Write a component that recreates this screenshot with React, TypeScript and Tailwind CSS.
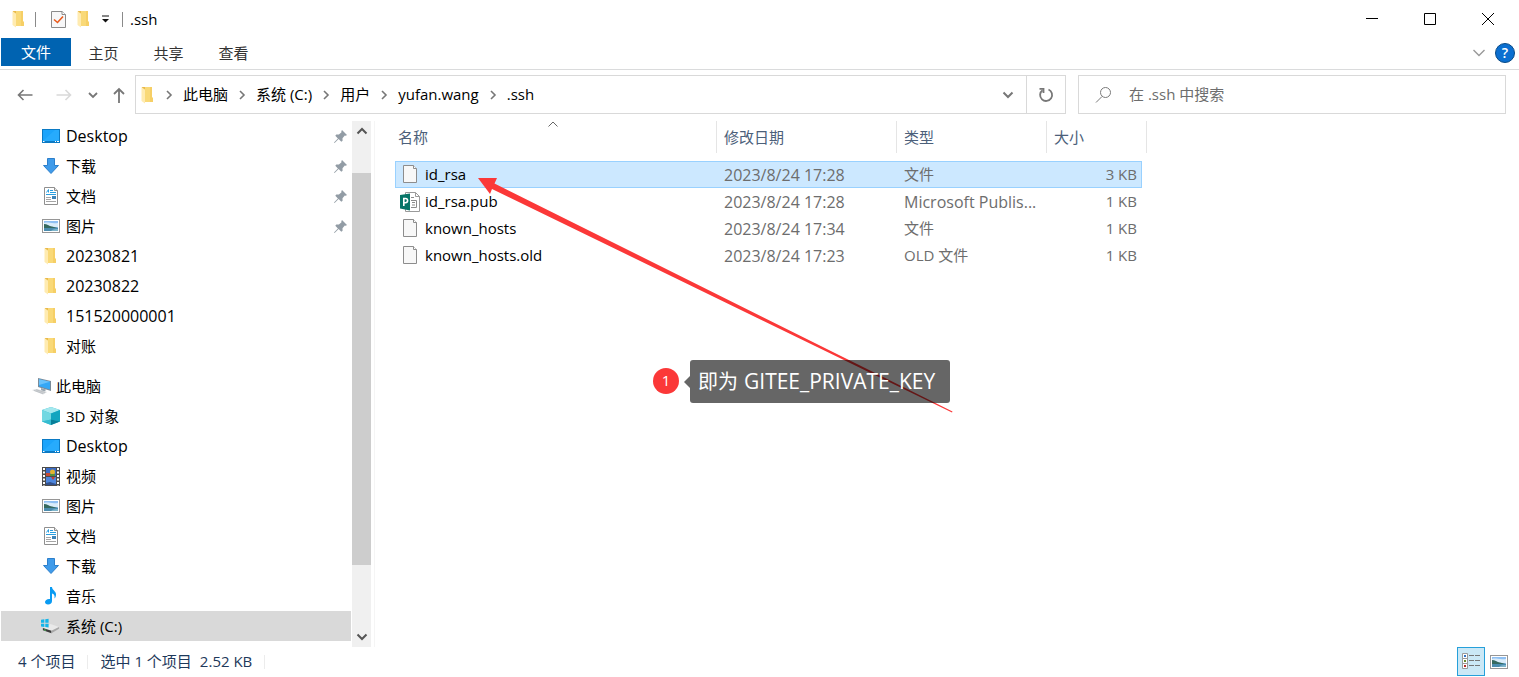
import type { ReactNode } from 'react';

interface TreeItem {
  id: string;
  label: string;
  icon: ReactNode;
  pinned?: boolean;
  selected?: boolean;
}

interface FileItem {
  name: string;
  icon: ReactNode;
  modified: string;
  type: string;
  size: string;
  selected?: boolean;
}

function FolderIcon() {
  return (
    <svg width="13" height="18" viewBox="0 0 13 18" className="shrink-0">
      <path d="M1 1h10v10.500l1 .5v4H3z" fill="#fbdc80" />
      <path d="M4 1h7v10.500l1 .5v4H4z" fill="#f9d978" />
      <path d="M9 1h2v10.500l1 .5v4H9z" fill="#f6cf66" />
      <path d="M0.500 1.500L4 3.500V17.500L0.500 15z" fill="#ffebb0" />
      <path d="M0.500 1h3.500v2.500z" fill="#e9b94c" />
    </svg>
  );
}

function DesktopIcon() {
  return (
    <svg width="18" height="14" viewBox="0 0 18 14">
      <rect width="18" height="14" fill="#0b7ac4" />
      <rect x="1" y="1" width="16" height="11" fill="#1ca4fb" />
      <path d="M1 12L13 1h4v11z" fill="#2eb0ff" opacity=".6" />
      <path d="M1 12.500h1.500M13 12.500h1M15 12.500h2" stroke="#fff" />
    </svg>
  );
}

function DownloadIcon() {
  return (
    <svg width="18" height="18" viewBox="0 0 18 18">
      <path d="M5.500 1.500h7v7h4L9 16.500 1.500 8.500h4z" fill="#3f9bea" stroke="#2c7fcb" />
    </svg>
  );
}

function DocumentIcon() {
  return (
    <svg width="18" height="18" viewBox="0 0 18 18">
      <path d="M2.500 .5h10l3 3v14h-13z" fill="#fff" stroke="#8f8f8f" />
      <path d="M12.500 .5v3h3" fill="#e8e8e8" stroke="#8f8f8f" />
      <path d="M4.500 5.500l2-3v3M8 3.500h3M8 5.500h6M4 7.500h10" fill="none" stroke="#2a9fe0" />
      <path d="M4 10.500h5M4 12.500h5M4 14.500h10" stroke="#a5a5a5" />
      <rect x="10" y="9" width="4" height="3" fill="#3c83b8" />
    </svg>
  );
}

function PictureIcon() {
  return (
    <svg width="18" height="14" viewBox="0 0 18 14">
      <rect x=".5" y=".5" width="17" height="13" fill="#fff" stroke="#969696" />
      <rect x="2" y="2" width="14" height="10" fill="#8fc0f3" />
      <path d="M2 4c4-1.500 6 1 14 0v4H2z" fill="#d9ecfa" />
      <path d="M2 5c3 0 5 2 8 2.500l6 1.500H2z" fill="#35695f" />
      <path d="M2 9h14v3H2z" fill="#4b8cae" />
      <path d="M9 12c2-2 5-2 7-2v2z" fill="#7eb5cb" />
    </svg>
  );
}

function ComputerIcon() {
  return (
    <svg width="20" height="18" viewBox="0 0 20 18">
      <path d="M6 1l13 3v10L6 10z" fill="#7a8b99" />
      <path d="M7 2.200l11 2.600v7.800L7 9.200z" fill="#35a7f5" />
      <path d="M7 2.200l11 2.600L7 8z" fill="#6ac2fb" />
      <path d="M9 11l5 1.500-1 2-4-1z" fill="#9aa5ae" />
      <path d="M0 13l5-1 10 3-4 2.500z" fill="#d2d5d8" />
      <path d="M2 13.500l9 3M4 12.800l9 2.700" stroke="#aeb3b8" strokeWidth=".6" />
    </svg>
  );
}

function CubeIcon() {
  return (
    <svg width="18" height="18" viewBox="0 0 18 18">
      <path d="M9 0l9 3v11.500L9 18l-9-3.500V3z" fill="#35bcd0" />
      <path d="M9 0l9 3-9 3.500L0 3z" fill="#a4e8ee" />
      <path d="M0 3l9 3.500v6L0 14.500z" fill="#72d8e2" />
      <path d="M9 6.500L18 3v11.500l-9-2z" fill="#12a5bf" />
      <path d="M0 14.500l9-2V18z" fill="#35bcd0" />
      <path d="M9 12.500l9 2L9 18z" fill="#087f99" />
    </svg>
  );
}

function VideoIcon() {
  return (
    <svg width="18" height="19" viewBox="0 0 18 19">
      <rect width="18" height="19" fill="#4b4b4b" />
      <path d="M2 1v18M16 1v18" stroke="#fff" strokeWidth="2" strokeDasharray="2 1.500" />
      <rect x="4" y="1" width="10" height="8" fill="#3b6cc7" />
      <rect x="4" y="10" width="10" height="8" fill="#4d86dd" />
      <circle cx="10.500" cy="5" r="2.500" fill="#e2b32e" />
      <path d="M4 6h4v3H4z" fill="#c84b33" />
      <path d="M8 7h5v2H8z" fill="#55903a" />
      <path d="M9 10h4l-2 3z" fill="#c53d32" />
      <path d="M4 16l4-1 6 2v1H4z" fill="#32508c" />
    </svg>
  );
}

function MusicIcon() {
  return (
    <svg width="18" height="18" viewBox="0 0 18 18">
      <path
        d="M8 0h2c0 3 4 4 4 7.500 0 1.500-.5 3-1.500 4 .5-3-.5-4.500-2.500-5V14c0 2-1.500 3.500-4 3.500-1.800 0-3-1-3-2.400C3 13 5.500 11.500 8 12z"
        fill="#0a9bf2"
      />
    </svg>
  );
}

function DriveIcon() {
  return (
    <svg width="20" height="16" viewBox="0 0 20 16">
      <path d="M2 10l8-4 9 3-8 4z" fill="#e9e9e9" />
      <path d="M2 10l9 3v2.500l-9-3z" fill="#3c3c3c" />
      <path d="M11 13l8-4v2l-8 4.500z" fill="#a9a9a9" />
      <path d="M3.500 12l1.500.5" stroke="#4be05b" strokeWidth="1.200" />
      <path d="M0 1.500L3.500 1v3.500H0zM4.500 .8L8 .3v4.200H4.500zM0 5.500h3.500V9L0 8.500zM4.500 5.500H8v4l-3.500-.4z" fill="#14b5ea" />
    </svg>
  );
}

function FileIcon() {
  return (
    <svg width="20" height="20" viewBox="0 0 20 20">
      <path d="M3.500 .5h10l3 3v14h-13z" fill="#f8f8f8" stroke="#8d8d8d" />
      <path d="M13.500 .5v3h3" fill="#fff" stroke="#8d8d8d" />
    </svg>
  );
}

function PublisherIcon() {
  return (
    <svg width="20" height="20" viewBox="0 0 20 20">
      <path d="M5.500 .5h10l4 4v15h-14z" fill="#fff" stroke="#9a9a9a" />
      <path d="M15.500 .5v4h4" fill="none" stroke="#9a9a9a" />
      <path d="M11 5.500h3M11 8.500h5.500v7H11M12 10.500h3M12 13h3" fill="none" stroke="#8b8b8b" />
      <path d="M0 3l10-1.500v17L0 16.500z" fill="#077568" />
      <path d="M3.800 14V6.500h1.700a2.100 2.100 0 0 1 0 4.200H3.800" fill="none" stroke="#fff" strokeWidth="1.600" />
    </svg>
  );
}

function CheckedPageIcon() {
  return (
    <svg width="15" height="19" viewBox="0 0 15 19">
      <path d="M.5 1.500h10.500l3.500 3v13H.5z" fill="#f7f7f8" stroke="#8b8b8b" />
      <path d="M11 1.500v3h3.500" fill="#fff" stroke="#8b8b8b" />
      <path d="M3 9.500l3.500 3L12 6.500" fill="none" stroke="#e95a1c" strokeWidth="1.600" />
    </svg>
  );
}

function PinIcon() {
  return (
    <svg width="13" height="13" viewBox="0 0 13 13">
      <path d="M8 0l5 5-1.200.8-1-.2-2.300 2.600.1 2.600-1.300 1-2.700-2.700L.6 13 0 12.400l3.900-4L1.300 5.700l1-1.300 2.600.1 2.600-2.300-.2-1z" fill="#929ca5" />
    </svg>
  );
}

function Chevron({ path, className }: { path: string; className: string }) {
  return (
    <svg width="12" height="12" viewBox="0 0 12 12" fill="none" stroke="currentColor" className={className}>
      <path d={path} />
    </svg>
  );
}

const CHEVRON_DOWN = 'M1.500 3.500L6 8l4.500-4.500';
const CHEVRON_UP = 'M1.500 8.500L6 4l4.500 4.500';

const QUICK_ACCESS: TreeItem[] = [
  { id: 'q-desktop', label: 'Desktop', icon: <DesktopIcon />, pinned: true },
  { id: 'q-downloads', label: '下载', icon: <DownloadIcon />, pinned: true },
  { id: 'q-documents', label: '文档', icon: <DocumentIcon />, pinned: true },
  { id: 'q-pictures', label: '图片', icon: <PictureIcon />, pinned: true },
  { id: 'q-0821', label: '20230821', icon: <FolderIcon /> },
  { id: 'q-0822', label: '20230822', icon: <FolderIcon /> },
  { id: 'q-1515', label: '151520000001', icon: <FolderIcon /> },
  { id: 'q-bills', label: '对账', icon: <FolderIcon /> }
];

const THIS_PC: TreeItem[] = [
  { id: 'p-3d', label: '3D 对象', icon: <CubeIcon /> },
  { id: 'p-desktop', label: 'Desktop', icon: <DesktopIcon /> },
  { id: 'p-videos', label: '视频', icon: <VideoIcon /> },
  { id: 'p-pictures', label: '图片', icon: <PictureIcon /> },
  { id: 'p-documents', label: '文档', icon: <DocumentIcon /> },
  { id: 'p-downloads', label: '下载', icon: <DownloadIcon /> },
  { id: 'p-music', label: '音乐', icon: <MusicIcon /> },
  { id: 'p-c', label: '系统 (C:)', icon: <DriveIcon />, selected: true }
];

const FILES: FileItem[] = [
  { name: 'id_rsa', icon: <FileIcon />, modified: '2023/8/24 17:28', type: '文件', size: '3 KB', selected: true },
  { name: 'id_rsa.pub', icon: <PublisherIcon />, modified: '2023/8/24 17:28', type: 'Microsoft Publis...', size: '1 KB' },
  { name: 'known_hosts', icon: <FileIcon />, modified: '2023/8/24 17:34', type: '文件', size: '1 KB' },
  { name: 'known_hosts.old', icon: <FileIcon />, modified: '2023/8/24 17:23', type: 'OLD 文件', size: '1 KB' }
];

const PATH = ['此电脑', '系统 (C:)', '用户', 'yufan.wang', '.ssh'];

// Latin-only names are set one step larger than the Chinese ones
const isLatin = (text: string) => /^[\x20-\x7e]+$/.test(text);

function TitleBar() {
  return (
    <header className="flex h-[38px] items-center pl-3 pr-0.5">
      <FolderIcon />
      <span className="ml-2.5 h-[15px] w-px bg-[#8a8a8a]" />
      <button aria-label="属性" className="ml-[15px]">
        <CheckedPageIcon />
      </button>
      <button aria-label="新建文件夹" className="ml-[11px]">
        <FolderIcon />
      </button>
      <button aria-label="自定义快速访问工具栏" className="ml-3">
        <svg width="8" height="8" viewBox="0 0 8 8">
          <path d="M0 1h7" stroke="#111" />
          <path d="M0 4h7L3.500 7.500z" fill="#111" />
        </svg>
      </button>
      <span className="ml-3 h-[15px] w-px bg-[#8a8a8a]" />
      <h1 className="ml-[7px] text-[15px]">.ssh</h1>
      <div className="ml-auto flex h-full">
        <button aria-label="最小化" className="flex w-[58px] items-center justify-center">
          <svg width="12" height="12" stroke="#000">
            <path d="M0 5.500h12" />
          </svg>
        </button>
        <button aria-label="最大化" className="flex w-[58px] items-center justify-center">
          <svg width="12" height="12" stroke="#000" fill="none">
            <path d="M.5 .5h11v11H.5z" />
          </svg>
        </button>
        <button aria-label="关闭" className="flex w-[58px] items-center justify-center">
          <svg width="12" height="12" stroke="#000">
            <path d="M0 0l12 12M12 0L0 12" />
          </svg>
        </button>
      </div>
    </header>
  );
}

function RibbonTabs() {
  return (
    <div className="flex h-8 items-start border-b border-[#dadbdc] pl-px text-[15px] text-[#333]">
      <button className="h-7 w-[70px] bg-[#0063b1] text-white">文件</button>
      {['主页', '共享', '查看'].map((tab) => (
        <button key={tab} className="h-[30px] w-[65px]">
          {tab}
        </button>
      ))}
      <div className="ml-auto flex h-[30px] items-center gap-2.5 pr-1">
        <button aria-label="展开功能区" className="text-[#999]">
          <svg width="12" height="8" fill="none" stroke="currentColor" strokeWidth="1.400">
            <path d="M.5 1L6 6.500 11.500 1" />
          </svg>
        </button>
        <button
          aria-label="帮助"
          className="flex size-5 items-center justify-center rounded-full border border-[#084a86] bg-[#0b6fd0] text-sm font-semibold text-white"
        >
          ?
        </button>
      </div>
    </div>
  );
}

function AddressRow() {
  return (
    <div className="flex h-[51px] items-start pl-[5px] pr-[13px] pt-[5px] text-[15px]">
      <nav className="flex h-[39px] items-center text-[#777]">
        <button aria-label="后退" className="flex w-[39px] justify-center">
          <svg width="16" height="12" fill="none" stroke="currentColor" strokeWidth="1.600">
            <path d="M15.500 6H1.500M6.500 1l-5 5 5 5" />
          </svg>
        </button>
        <button aria-label="前进" className="flex w-[39px] justify-center text-[#d9d9d9]">
          <svg width="16" height="12" fill="none" stroke="currentColor" strokeWidth="1.600">
            <path d="M.5 6h14M9.500 1l5 5-5 5" />
          </svg>
        </button>
        <button aria-label="最近的位置" className="flex w-5 justify-center">
          <svg width="10" height="8" fill="none" stroke="currentColor" strokeWidth="1.800">
            <path d="M1 2l4 4 4-4" />
          </svg>
        </button>
        <button aria-label="上移" className="flex w-8 justify-center">
          <svg width="12" height="16" fill="none" stroke="currentColor" strokeWidth="1.800">
            <path d="M6 16V2M1 7l5-5 5 5" />
          </svg>
        </button>
      </nav>
      <div className="flex h-[39px] flex-1 items-center border border-[#d9d9d9] pl-[5px]">
        <FolderIcon />
        <ol className="ml-[3px] flex items-center gap-0.5">
          {PATH.map((part) => (
            <li key={part} className="flex items-center">
              <Chevron path="M4 2l4 4-4 4" className="ml-1.5 mr-2 stroke-[1.600] text-[#777]" />
              <button>{part}</button>
            </li>
          ))}
        </ol>
        <button aria-label="以前的位置" className="ml-auto mr-3 text-[#777]">
          <Chevron path={CHEVRON_DOWN} className="stroke-2" />
        </button>
        <button aria-label="刷新" className="flex h-full w-[39px] items-center justify-center border-l border-[#d9d9d9] text-[#777]">
          <svg width="16" height="16" fill="none" stroke="currentColor" strokeWidth="1.800">
            <path d="M10.500 2.500A6 6 0 1 1 4.500 3.200" />
            <path d="M1.500 1.900h4v4" />
          </svg>
        </button>
      </div>
      <label className="ml-3 flex h-[39px] w-[428px] items-center border border-[#d9d9d9] pl-4">
        <svg width="18" height="18" fill="none" stroke="#7a7a7a" className="shrink-0">
          <circle cx="10.500" cy="6.500" r="5" />
          <path d="M7 10.500L1 16.500" />
        </svg>
        <input
          type="text"
          aria-label="搜索"
          placeholder="在 .ssh 中搜索"
          className="ml-4 w-full outline-none placeholder:text-[#6d6d6d]"
        />
      </label>
    </div>
  );
}

function TreeRow({ item }: { item: TreeItem }) {
  return (
    <li>
      <button className={`flex h-[30px] w-full items-center pl-10 pr-1 ${item.selected ? 'bg-[#d9d9d9]' : ''}`}>
        <span className="mr-1.5 flex w-[19px] justify-center">{item.icon}</span>
        <span className={isLatin(item.label) ? 'text-base' : 'text-[15px]'}>{item.label}</span>
        {item.pinned && (
          <span className="ml-auto">
            <PinIcon />
          </span>
        )}
      </button>
    </li>
  );
}

function Sidebar() {
  return (
    <aside className="flex w-[375px] shrink-0 border-r border-[#f5f5f5] pl-px">
      <div className="flex-1 pb-1.5">
        <ul>
          {QUICK_ACCESS.map((item) => (
            <TreeRow key={item.id} item={item} />
          ))}
        </ul>
        <button className="mt-2.5 flex h-[30px] items-center gap-1 pl-[31px] text-[15px]">
          <ComputerIcon />
          此电脑
        </button>
        <ul>
          {THIS_PC.map((item) => (
            <TreeRow key={item.id} item={item} />
          ))}
        </ul>
      </div>
      <div className="ml-px mr-[3px] flex w-[19px] flex-col items-center bg-[#f0f0f0] text-[#555]">
        <button aria-label="向上滚动" className="flex h-[52px] pt-1">
          <Chevron path={CHEVRON_UP} className="stroke-2" />
        </button>
        <div className="h-[392px] w-full bg-[#cdcdcd]" />
        <button aria-label="向下滚动" className="mt-auto pb-1">
          <Chevron path={CHEVRON_DOWN} className="stroke-2" />
        </button>
      </div>
    </aside>
  );
}

function FileTable() {
  return (
    <table className="w-[747px] table-fixed border-collapse text-left text-[15px]">
      <thead className="text-[#4c607a]">
        <tr>
          <th className="w-[322px] p-0 pb-2 font-normal">
            <div className="relative flex h-8 items-center border-r border-[#e5e5e5] pl-[3px]">
              名称
              <svg width="10" height="6" fill="none" stroke="#666" className="absolute left-[153px] top-0">
                <path d="M.5 5.500L5 1l4.500 4.500" />
              </svg>
            </div>
          </th>
          <th className="w-[180px] p-0 pb-2 font-normal">
            <div className="flex h-8 items-center border-r border-[#e5e5e5] pl-[7px]">修改日期</div>
          </th>
          <th className="w-[150px] p-0 pb-2 font-normal">
            <div className="flex h-8 items-center border-r border-[#e5e5e5] pl-[7px]">类型</div>
          </th>
          <th className="w-[95px] p-0 pb-2 font-normal">
            <div className="-mr-[5px] flex h-8 items-center border-r border-[#e5e5e5] pl-[7px]">大小</div>
          </th>
        </tr>
      </thead>
      <tbody className="text-[#6d6d6d]">
        {FILES.map((file) => (
          <tr
            key={file.name}
            className={`h-[27px] ${file.selected ? 'bg-[#cce8ff] outline-1 -outline-offset-1 outline-[#99d1ff]' : ''}`}
          >
            <td className="p-0 pl-[5px]">
              <div className="flex items-center gap-[5px] text-black">
                {file.icon}
                {file.name}
              </div>
            </td>
            <td className="p-0 pl-[7px] text-base">{file.modified}</td>
            <td className={`whitespace-nowrap p-0 pl-[7px] ${isLatin(file.type) ? 'text-base' : ''}`}>{file.type}</td>
            <td className="p-0 pr-[5px] text-right">{file.size}</td>
          </tr>
        ))}
      </tbody>
    </table>
  );
}

// Arrow and numbered callout that float over the file list
function Annotation() {
  return (
    <>
      <svg width="480" height="240" viewBox="0 0 480 240" className="pointer-events-none absolute left-[102px] top-[56px]">
        <path d="M1 1l19 0-2.500 5.500L475.500 234.500l-.5 1L15 12l-2 5z" fill="#fb3838" />
      </svg>
      <div className="absolute left-[278px] top-[239px] flex items-center">
        <span className="mb-0.5 flex size-[26px] items-center justify-center rounded-full bg-[#fb3838] text-[15px] text-white">1</span>
        <svg width="6" height="12" className="ml-[5px]">
          <path d="M6 0v12L0 6z" fill="#000" opacity=".6" />
        </svg>
        <p className="flex h-[43px] w-[260px] items-center gap-1.5 whitespace-nowrap rounded-[3px] bg-black/60 pl-2 text-xl text-white">
          即为 <span className="text-[21px]">GITEE_PRIVATE_KEY</span>
        </p>
      </div>
    </>
  );
}

function StatusBar() {
  return (
    <footer className="flex h-[29px] items-center pl-[18px] pr-[11px] text-[15px] text-[#1e395b]">
      <span>4 个项目</span>
      <span className="mx-3 h-3.5 w-px bg-[#ececec]" />
      <span>选中 1 个项目</span>
      <span className="ml-2">2.52 KB</span>
      <span className="ml-3 h-3.5 w-px bg-[#ececec]" />
      <button
        aria-label="详细信息"
        className="ml-auto flex h-[29px] w-7 items-center justify-center border border-[#26a0da] bg-[#cbe8f6]"
      >
        <svg width="18" height="17" fill="none">
          <path d="M.5 .5h5v5h-5zM.5 5.500h5v5h-5zM.5 10.500h5v5h-5z" fill="#fff" stroke="#999" />
          <path d="M2 3h2" stroke="#2f73c4" strokeWidth="2" />
          <path d="M2 8h2" stroke="#6b8a2d" strokeWidth="2" />
          <path d="M2 13h2" stroke="#b52a2a" strokeWidth="2" />
          <path d="M7 2.500h5M13 2.500h5M7 7.500h5M13 7.500h5M7 12.500h5M13 12.500h5" stroke="#777" />
        </svg>
      </button>
      <button aria-label="大缩略图" className="ml-[5px]">
        <PictureIcon />
      </button>
    </footer>
  );
}

export default function App() {
  return (
    <div className="bg-white font-['Open_Sans','Noto_Sans_CJK_SC',sans-serif] text-black">
      <TitleBar />
      <RibbonTabs />
      <AddressRow />
      <div className="flex">
        <Sidebar />
        <main className="relative flex-1 pl-5">
          <FileTable />
          <Annotation />
        </main>
      </div>
      <StatusBar />
    </div>
  );
}
